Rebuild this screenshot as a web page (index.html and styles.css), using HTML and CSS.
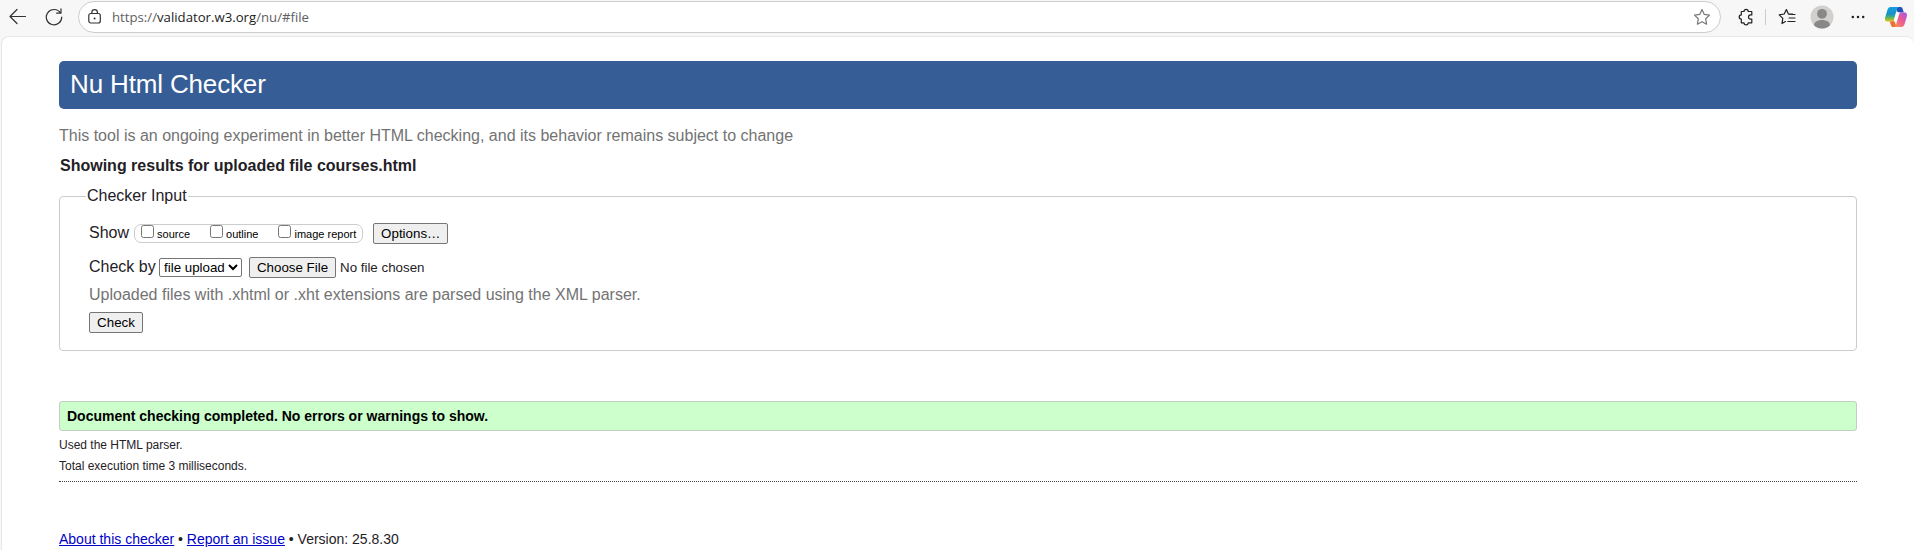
FILE: index.html
```html
<!DOCTYPE html>
<html lang="en">
<head>
<meta charset="utf-8">
<title>Nu Html Checker</title>
<link rel="stylesheet" href="styles.css">
</head>
<body>
<div class="toolbar">
  <svg class="icon back" width="18" height="18" viewBox="0 0 18 18"><path d="M16.500 8.500H1.500M8 1.500 1 8.500l7 7"/></svg>
  <svg class="icon reload" width="18" height="18" viewBox="0 0 18 18"><path d="M15.400 4.900A7.700 7.700 0 1 0 16.700 9M16 .8v4.400h-4.400"/></svg>
  <div class="address">
    <svg class="icon lock" width="14" height="16" viewBox="0 0 14 16"><rect x=".8" y="4.500" width="11.500" height="9.500" rx="2"/><path d="M3.800 4.500v-1a2.800 2.800 0 0 1 5.600 0v1"/><circle class="dot" cx="6.600" cy="9.400" r="1"/></svg>
    <span class="url"><span>https://</span><b>validator.w3.org</b><span>/nu/#file</span></span>
    <svg class="icon star" width="18" height="18" viewBox="0 0 18 18"><path d="m9 1.500 2.300 4.900 5.200.7-3.800 3.700.9 5.400L9 13.700l-4.600 2.500.9-5.400L1.500 7.100l5.200-.7z"/></svg>
  </div>
  <svg class="icon puzzle" width="16" height="18" viewBox="0 0 16 18"><path d="M3.300 3.500H6a2.100 2.100 0 0 1 4.200 0h3.600v3.400h-1.200a2 2 0 0 0 0 4.200h1.200v3.700h-3.600a2.100 2.100 0 0 1-4.200 0H3.300v-3.700a2 2 0 0 1 0-4.200z"/></svg>
  <span class="divider"></span>
  <svg class="icon favorites" width="18" height="18" viewBox="0 0 18 18"><path d="M14.500 6.200 10.400 6 8.400 1.500 6.200 6l-5 .8 3.600 3.600-.8 5.200 3.400-2M11 6.500h6M11 10h6M9.800 13.500H17"/></svg>
  <svg class="avatar" width="24" height="24" viewBox="0 0 24 24"><circle cx="12" cy="12" r="11.500" fill="#d2d0ce"/><circle cx="12" cy="8.800" r="4.900" fill="#8a8886"/><path d="M4 20.300c0-3 3-5.300 8-5.300s8 2.300 8 5.300a11.500 11.500 0 0 1-16 0z" fill="#8a8886"/></svg>
  <svg class="more" width="14" height="4" viewBox="0 0 14 4"><circle cx="1.800" cy="2" r="1.250"/><circle cx="7" cy="2" r="1.250"/><circle cx="12.200" cy="2" r="1.250"/></svg>
  <svg class="copilot" width="24" height="22" viewBox="0 0 24 22">
    <defs>
      <linearGradient id="cool" x1="0" y1="0" x2="0" y2="1"><stop offset="0" stop-color="#16a0dc"/><stop offset=".5" stop-color="#1794c8"/><stop offset=".75" stop-color="#62b658"/><stop offset="1" stop-color="#e9c51c"/></linearGradient>
      <linearGradient id="warm" x1="1" y1="0" x2="0" y2="1"><stop offset="0" stop-color="#a259e8"/><stop offset=".5" stop-color="#ee5b92"/><stop offset="1" stop-color="#fb9a45"/></linearGradient>
    </defs>
    <path d="M13 1h3.500c1.500 0 2 1.300 2.500 3l.8 2.500h-4.500c-1.500 0-2.300-.8-2.800-2.500z" fill="#2350ba"/>
    <path d="M6.500 1H15c-1.300.4-1.900 1.600-2.400 3.400l-2.300 8c-.6 2-1.500 3.100-3.300 3.100H3.500C1 15.500.6 13.500 1.300 11L3.400 4C4 2 5 1 6.500 1z" fill="url(#cool)"/>
    <path d="M5 15.500h2c1.700 0 2.500-.8 3-2.500l1.700 5.500c.5 1.500 1 2.500 2.300 2.500H9.500c-1.600 0-2.300-1-2.800-2.600C6.300 17 6 15.700 5 15.500z" fill="#ee6f32"/>
    <path d="M17.500 21H10c1.300-.4 1.900-1.600 2.400-3.400l2.300-8c.6-2 1.500-3.100 3.300-3.100h2.500c2.500 0 2.900 2 2.200 4.500l-2.100 7c-.6 2-1.600 3-3.100 3z" fill="url(#warm)"/>
    <path d="M11.900 7.200c.7-.5 1.700-.8 3.400-.7-.6 1-1 2.400-1.500 4.200l-1.200 4.300c-1 .5-2 .6-3.300.5.7-.9 1-2 1.400-3.500z" fill="#fff"/>
  </svg>
</div>
<main class="page">
  <h1 class="banner">Nu Html Checker</h1>
  <p class="intro">This tool is an ongoing experiment in better HTML checking, and its behavior remains subject to change</p>
  <h2 class="results-title">Showing results for uploaded file courses.html</h2>
  <fieldset class="checker">
    <legend>Checker Input</legend>
    <div class="row show-row">
      <span>Show</span>
      <div class="checks">
        <label><input type="checkbox">source</label>
        <label><input type="checkbox">outline</label>
        <label><input type="checkbox">image report</label>
      </div>
      <button class="btn options">Options…</button>
    </div>
    <div class="row by-row">
      <span class="by-label">Check by</span>
      <select class="method"><option>file upload</option></select>
      <button class="btn choose">Choose File</button>
      <span class="nofile">No file chosen</span>
    </div>
    <p class="hint">Uploaded files with .xhtml or .xht extensions are parsed using the XML parser.</p>
    <button class="btn check">Check</button>
  </fieldset>
  <p class="success">Document checking completed. No errors or warnings to show.</p>
  <div class="details"><p>Used the HTML parser.</p><p>Total execution time 3 milliseconds.</p></div>
  <footer class="footer"><a href="#">About this checker</a> • <a href="#">Report an issue</a> • Version: 25.8.30</footer>
</main>
</body>
</html>
```

FILE: styles.css
```css
* { box-sizing: border-box; }
html { height: 100%; overflow: hidden; }
body {
  margin: 0;
  height: 100%;
  overflow: hidden;
  background: #f7f7f7;
  color: #1f2126;
  font: 16px/20px "Liberation Sans", Arial, sans-serif;
}
h1, h2, p { margin: 0; }
svg { flex: none; display: block; }

.toolbar { display: flex; align-items: center; height: 36px; padding: 0 0 2px 9px; }
.icon { fill: none; stroke: #333; stroke-width: 1.2; stroke-linejoin: round; stroke-linecap: round; }
.reload { margin-left: 18px; }
.address {
  display: flex;
  flex: none;
  align-items: center;
  width: 1643px;
  height: 32px;
  margin-left: 15px;
  padding: 0 9px;
  border: 1px solid #cdcdcd;
  border-radius: 16px;
  background: #fff;
}
.dot { fill: #333; stroke: none; }
.url { flex: 1; margin-left: 10px; color: #606060; font: 13.2px/20px "Open Sans", sans-serif; }
.url b { color: #222; font-weight: 400; }
.star { stroke: #777; }
.puzzle { margin-left: 17px; stroke: #222; }
.divider { flex: none; width: 1px; height: 16px; margin-left: 11px; background: #ccc; }
.favorites { margin-left: 12px; stroke: #222; }
.avatar { margin-left: 14px; }
.more { margin-left: 17px; fill: #222; }
.copilot { margin-left: 19px; }

.page {
  height: 514px;
  margin-left: 1px;
  padding: 24px 57px 0 57px;
  border: 1px solid #e7e7e7;
  border-width: 1px 0 0 1px;
  border-radius: 8px 8px 0 0;
  background: #fff;
}
.banner {
  height: 48px;
  padding-left: 11px;
  border-radius: 5px;
  background: #365d95;
  color: #fff;
  font-size: 26px;
  font-weight: 400;
  letter-spacing: -0.15px;
  line-height: 46px;
}
.intro { margin-top: 17px; color: #737373; }
.results-title { margin-top: 10px; padding-left: 1px; font-size: 16px; }

.checker {
  height: 165px;
  margin: 10px 0 0;
  padding: 16px 29px 0;
  border: 1px solid #ccc;
  border-radius: 4px;
}
.checker legend { margin-left: -3px; padding: 0 1px; }
.row { display: flex; align-items: center; height: 22px; }
.checks {
  display: flex;
  gap: 20px;
  height: 19px;
  margin: 1px 10px 0 5px;
  padding: 0 6px;
  border: 1px solid #ccc;
  border-radius: 7px;
  color: #000;
  font-size: 11px;
  line-height: 18px;
}
.checks label { display: flex; }
.checks input { width: 13px; height: 13px; margin: 0 3px 0 0; }
.btn {
  height: 21px;
  padding: 0;
  border: 1px solid #767676;
  border-radius: 2px;
  background: #efefef;
  color: #000;
  font: 13.333px/19px "Liberation Sans", Arial, sans-serif;
}
.options { width: 75px; }
.by-row { margin-top: 12px; }
.by-label { width: 70px; }
.method {
  width: 83px;
  height: 19px;
  padding: 0;
  border: 1px solid #767676;
  border-radius: 2px;
  background-color: #fff;
  color: #000;
  font: 13.333px "Liberation Sans", Arial, sans-serif;
}
.choose { width: 87px; margin-left: 7px; }
.nofile { margin-left: 4px; padding-top: 2px; font-size: 13.333px; }
.hint { margin-top: 7px; color: #737373; }
.check { display: block; width: 54px; margin-top: 7px; }

.success {
  height: 30px;
  margin-top: 50px;
  padding-left: 7px;
  border: 1px solid #c3cec3;
  border-radius: 3px;
  background: #cfc;
  color: #000;
  font-size: 14px;
  font-weight: 700;
  line-height: 28px;
}
.details { height: 51px; padding-top: 4px; border-bottom: 1px dotted #444; font-size: 12px; line-height: 21px; }
.footer { margin-top: 47px; font-size: 14px; line-height: 20px; }
.footer a { color: #0000c8; }
```
